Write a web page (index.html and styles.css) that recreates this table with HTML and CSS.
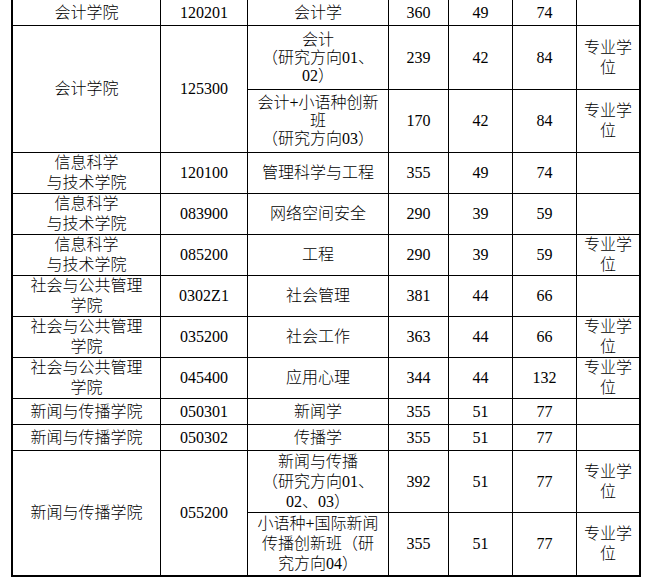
FILE: index.html
```html
<!DOCTYPE html>
<html lang="zh-CN">
<head>
<meta charset="utf-8">
<title>复试分数线</title>
<link rel="stylesheet" href="styles.css">
</head>
<body>
<div class="sheet">
  <div class="c">会计学院</div><div class="c">120201</div><div class="c">会计学</div><div class="c">360</div><div class="c">49</div><div class="c">74</div><div class="c"></div>

  <div class="c span2">会计学院</div><div class="c span2">125300</div><div class="c tight">会计<br>（研究方向01、<br>02）</div><div class="c">239</div><div class="c">42</div><div class="c">84</div><div class="c">专业学<br>位</div>
  <div class="c tight">会计+小语种创新<br>班<br>（研究方向03）</div><div class="c">170</div><div class="c">42</div><div class="c">84</div><div class="c">专业学<br>位</div>

  <div class="c">信息科学<br>与技术学院</div><div class="c">120100</div><div class="c">管理科学与工程</div><div class="c">355</div><div class="c">49</div><div class="c">74</div><div class="c"></div>
  <div class="c">信息科学<br>与技术学院</div><div class="c">083900</div><div class="c">网络空间安全</div><div class="c">290</div><div class="c">39</div><div class="c">59</div><div class="c"></div>
  <div class="c">信息科学<br>与技术学院</div><div class="c">085200</div><div class="c">工程</div><div class="c">290</div><div class="c">39</div><div class="c">59</div><div class="c">专业学<br>位</div>

  <div class="c">社会与公共管理<br>学院</div><div class="c">0302Z1</div><div class="c">社会管理</div><div class="c">381</div><div class="c">44</div><div class="c">66</div><div class="c"></div>
  <div class="c">社会与公共管理<br>学院</div><div class="c">035200</div><div class="c">社会工作</div><div class="c">363</div><div class="c">44</div><div class="c">66</div><div class="c">专业学<br>位</div>
  <div class="c">社会与公共管理<br>学院</div><div class="c">045400</div><div class="c">应用心理</div><div class="c">344</div><div class="c">44</div><div class="c">132</div><div class="c">专业学<br>位</div>

  <div class="c">新闻与传播学院</div><div class="c">050301</div><div class="c">新闻学</div><div class="c">355</div><div class="c">51</div><div class="c">77</div><div class="c"></div>
  <div class="c">新闻与传播学院</div><div class="c">050302</div><div class="c">传播学</div><div class="c">355</div><div class="c">51</div><div class="c">77</div><div class="c"></div>

  <div class="c span2">新闻与传播学院</div><div class="c span2">055200</div><div class="c">新闻与传播<br>（研究方向01、<br>02、03）</div><div class="c">392</div><div class="c">51</div><div class="c">77</div><div class="c">专业学<br>位</div>
  <div class="c">小语种+国际新闻<br>传播创新班（研<br>究方向04）</div><div class="c">355</div><div class="c">51</div><div class="c">77</div><div class="c">专业学<br>位</div>
</div>
</body>
</html>
```

FILE: styles.css
```css
html, body {
  margin: 0;
  padding: 0;
  background: #ffffff;
}

.sheet {
  margin-left: 11px;
  width: 630px;
  box-sizing: border-box;
  padding: 0 2px 2px 2px;
  background: #000000;
  display: grid;
  grid-template-columns: 147px 86px 140px 59px 63px 63px 62px;
  grid-template-rows: 25px 63px 62px 40px 40px 40px 40px 40px 40px 25px 25px 61px 62px;
  gap: 1px;
  font-family: "Liberation Serif", "Noto Sans CJK SC", serif;
  font-size: 16px;
  font-weight: 300;
  color: #000000;
}

.c {
  background: #ffffff;
  display: flex;
  align-items: center;
  justify-content: center;
  text-align: center;
  line-height: 20px;
  white-space: nowrap;
  overflow: hidden;
}

.span2 {
  grid-row: span 2;
}

.tight {
  line-height: 18px;
}
```
